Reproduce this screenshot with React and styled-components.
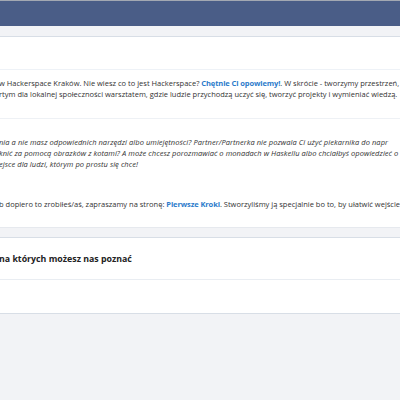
import React from 'react'
import styled, { createGlobalStyle } from 'styled-components'

const GlobalStyle = createGlobalStyle`
  html, body {
    margin: 0;
    padding: 0;
    background: #f2f3f6;
    font-family: "Open Sans", "Noto Sans", sans-serif;
    color: #333;
  }
`

const App = () => {
  return (
    <Page>
      <GlobalStyle />
      <TopBar />
      <SubBar />
      <Card>
        <CardHead />
        <CardBody>
          <Paragraph>
            <Line>
              w Hackerspace Kraków. Nie wiesz co to jest Hackerspace? <Link>Chętnie Ci opowiemy!</Link>. W skrócie - tworzymy przestrzeń,
            </Line>
            <Line>
              rtym dla lokalnej społeczności warsztatem, gdzie ludzie przychodzą uczyć się, tworzyć projekty i wymieniać wiedzą.
            </Line>
          </Paragraph>
          <Divider />
          <Paragraph italic>
            <Line>
              nia a nie masz odpowiednich narzędzi albo umiejętności? Partner/Partnerka nie pozwala Ci użyć piekarnika do napr
            </Line>
            <Line>
              knić za pomocą obrazków z kotami? A może chcesz porozmawiać o monadach w Haskellu albo chciałbyś opowiedzieć o
            </Line>
            <Line>ejsce dla ludzi, którym po prostu się chce!</Line>
          </Paragraph>
          <Paragraph spaced>
            <Line>
              b dopiero to zrobiłeś/aś, zapraszamy na stronę: <Link>Pierwsze Kroki</Link>. Stworzyliśmy ją specjalnie bo to, by ułatwić wejście
            </Line>
          </Paragraph>
        </CardBody>
      </Card>
      <Gap />
      <Card edge>
        <SectionTitle>na których możesz nas poznać</SectionTitle>
        <SectionBody />
      </Card>
    </Page>
  )
}

export default App

const Page = styled.div`
  width: 400px;
  min-height: 400px;
  overflow: hidden;
`

const TopBar = styled.div`
  height: 25px;
  border-top: 1px solid #a3a8b2;
  background: #4a5d87;
`

const SubBar = styled.div`
  height: 10px;
  background: #f2f3f6;
  border-bottom: 1px solid #d8dee6;
`

const Card = styled.div`
  background: #fff;
  border-top: ${props => props.edge ? '1px solid #d8dee6' : 'none'};
  border-bottom: 1px solid ${props => props.edge ? '#d8dee6' : '#e6e9ee'};
`

const CardHead = styled.div`
  height: 32px;
  border-bottom: 1px solid #eef2f7;
`

const CardBody = styled.div`
  padding: 8px 0 17px;
`

const Paragraph = styled.div`
  font-size: 7.5px;
  line-height: 11px;
  font-style: ${props => props.italic ? 'italic' : 'normal'};
  letter-spacing: ${props => props.italic ? '0.05px' : 'normal'};
  margin-top: ${props => props.spaced ? '29px' : '0'};
`

const Line = styled.div`
  white-space: nowrap;
  margin-left: -1px;
`

const Link = styled.b`
  color: #2b7bcb;
  font-weight: 700;
  letter-spacing: -0.1px;
`

const Divider = styled.div`
  height: 1px;
  background: #eef1f5;
  margin: 18px 0 18px;
`

const Gap = styled.div`
  height: 9px;
`

const SectionTitle = styled.div`
  height: 41px;
  display: flex;
  align-items: center;
  font-size: 8.8px;
  font-weight: 700;
  color: #222;
  margin-left: -1px;
  white-space: nowrap;
  border-bottom: 1px solid #e9edf2;
`

const SectionBody = styled.div`
  height: 33px;
`
